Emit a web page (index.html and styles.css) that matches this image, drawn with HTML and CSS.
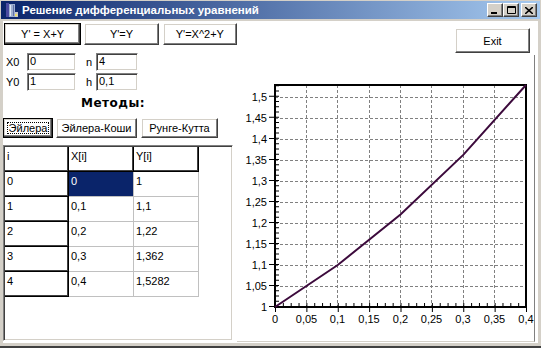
FILE: index.html
```html
<!DOCTYPE html>
<html lang="ru">
<head>
    <meta charset="UTF-8">
    <title>Решение дифференциальных уравнений</title>
    <link rel="stylesheet" href="styles.css">
</head>
<body>
    <div class="window">
        <div class="titlebar">
            <svg class="app-icon" width="16" height="16" viewBox="0 0 16 16">
                <rect x="3" y="1" width="3" height="14" fill="#4a4aa0"/>
                <rect x="6" y="2" width="6" height="13" fill="#9fb0d0"/>
                <rect x="7" y="3" width="1" height="11" fill="#e0e8f8"/>
                <rect x="10" y="3" width="1" height="11" fill="#6070a8"/>
                <rect x="12" y="10" width="3" height="5" fill="#c8c8c8"/>
                <rect x="12" y="12" width="2" height="2" fill="#f0e060"/>
            </svg>
            <span class="title">Решение дифференциальных уравнений</span>
            <div class="caption-buttons">
                <span class="cap-btn"><svg width="8" height="7" viewBox="0 0 8 7"><rect x="0" y="5" width="6" height="2" fill="#000"/></svg></span>
                <span class="cap-btn"><svg width="9" height="8" viewBox="0 0 9 8"><path d="M0.5 0.5h8v7h-8z M0 1.5h9" fill="none" stroke="#000"/></svg></span>
                <span class="cap-btn cap-close"><svg width="8" height="7" viewBox="0 0 8 7"><path d="M0 0l8 7M8 0l-8 7" stroke="#000" stroke-width="1.6"/></svg></span>
            </div>
        </div>

        <div class="client">
            <div class="left-pane">
                <div class="eq-row">
                    <button class="btn btn-default eq-1">Y' = X+Y</button>
                    <button class="btn eq-2">Y'=Y</button>
                    <button class="btn eq-3">Y'=X^2+Y</button>
                </div>

                <div class="params">
                    <div class="param-row">
                        <span class="lbl">X0</span>
                        <div class="edit edit-wide">0</div>
                        <span class="lbl lbl-short">n</span>
                        <div class="edit edit-narrow">4</div>
                    </div>
                    <div class="param-row">
                        <span class="lbl">Y0</span>
                        <div class="edit edit-wide">1</div>
                        <span class="lbl lbl-short">h</span>
                        <div class="edit edit-narrow">0,1</div>
                    </div>
                </div>

                <div class="methods-title">Методы:</div>

                <div class="methods">
                    <button class="btn btn-default btn-focus m-euler">Эйлера</button>
                    <button class="btn m-cauchy">Эйлера-Коши</button>
                    <button class="btn m-runge">Рунге-Кутта</button>
                </div>

                <div class="grid-box">
                    <div class="grid">
                        <div class="cell fixed">i</div>
                        <div class="cell fixed">X[i]</div>
                        <div class="cell fixed">Y[i]</div>

                        <div class="cell fixed">0</div>
                        <div class="cell selected">0</div>
                        <div class="cell">1</div>

                        <div class="cell fixed">1</div>
                        <div class="cell">0,1</div>
                        <div class="cell">1,1</div>

                        <div class="cell fixed">2</div>
                        <div class="cell">0,2</div>
                        <div class="cell">1,22</div>

                        <div class="cell fixed">3</div>
                        <div class="cell">0,3</div>
                        <div class="cell">1,362</div>

                        <div class="cell fixed">4</div>
                        <div class="cell">0,4</div>
                        <div class="cell">1,5282</div>
                    </div>
                </div>
            </div>

            <div class="right-pane">
                <div class="exit-row">
                    <button class="btn exit">Exit</button>
                </div>
                <div class="chart">
                    <svg class="plot" width="297" height="286" viewBox="0 0 297 286">
                        <!-- grid -->
                        <g stroke="#808080" stroke-dasharray="3 2" fill="none">
                            <path d="M69.5 30V252M100.5 30V252M132.5 30V252M163.5 30V252M194.5 30V252M226.5 30V252M257.5 30V252"/>
                            <path d="M38 231.5H289M38 210.5H289M38 189.5H289M38 168.5H289M38 147.5H289M38 126.5H289M38 105.5H289M38 84.5H289M38 63.5H289M38 42.5H289"/>
                        </g>
                        <!-- ticks -->
                        <g stroke="#000" fill="none">
                            <line x1="34.5" y1="252" x2="34.5" y2="30" stroke-width="5" stroke-dasharray="1 20.015"/>
                            <line x1="40.5" y1="252" x2="40.5" y2="30" stroke-width="3" stroke-dasharray="1 4.254"/>
                            <line x1="38" y1="255" x2="290" y2="255" stroke-width="4" stroke-dasharray="1 30.375"/>
                            <line x1="38" y1="249.5" x2="290" y2="249.5" stroke-width="3" stroke-dasharray="1 6.844"/>
                        </g>
                        <!-- frame / axes -->
                        <rect x="38" y="30" width="251" height="222" fill="none" stroke="#000" stroke-width="2"/>
                        <!-- y labels -->
                        <g class="axis-text" text-anchor="end">
                            <text x="30" y="256">1</text>
                            <text x="30" y="235">1,05</text>
                            <text x="30" y="214">1,1</text>
                            <text x="30" y="193">1,15</text>
                            <text x="30" y="172">1,2</text>
                            <text x="30" y="151">1,25</text>
                            <text x="30" y="130">1,3</text>
                            <text x="30" y="109">1,35</text>
                            <text x="30" y="88">1,4</text>
                            <text x="30" y="67">1,45</text>
                            <text x="30" y="46">1,5</text>
                        </g>
                        <!-- x labels -->
                        <g class="axis-text" text-anchor="middle">
                            <text x="38" y="268">0</text>
                            <text x="69.5" y="268">0,05</text>
                            <text x="100.5" y="268">0,1</text>
                            <text x="132" y="268">0,15</text>
                            <text x="163.5" y="268">0,2</text>
                            <text x="194.5" y="268">0,25</text>
                            <text x="226" y="268">0,3</text>
                            <text x="257.5" y="268">0,35</text>
                            <text x="289" y="268">0,4</text>
                        </g>
                        <!-- series -->
                        <polyline points="38,252 100.75,209.97 163.5,159.53 226.25,99.85 289,30" fill="none" stroke="#3c0a3c" stroke-width="2"/>
                    </svg>
                </div>
            </div>
        </div>
    </div>
</body>
</html>
```

FILE: styles.css
```css
* {
    box-sizing: border-box;
}

body {
    margin: 0;
    background: #d4d0c8;
    font-family: "Liberation Sans", Arial, sans-serif;
    font-size: 11px;
    color: #000;
    overflow: hidden;
}

.window {
    width: 541px;
    height: 348px;
    padding-top: 1px;
    border-bottom: 2px solid #404040;
}

/* title bar */
.titlebar {
    margin: 0 1px;
    height: 18px;
    display: flex;
    align-items: center;
    background: linear-gradient(to right, #0a246a, #a6caf0);
}

.app-icon {
    margin-left: 2px;
    flex: none;
}

.title {
    margin-left: 3px;
    color: #fff;
    font-weight: bold;
    font-size: 11.5px;
    white-space: nowrap;
}

.caption-buttons {
    margin-left: auto;
    margin-right: 3px;
    display: flex;
}

.cap-btn {
    width: 16px;
    height: 14px;
    display: flex;
    align-items: center;
    justify-content: center;
    background: #d4d0c8;
    border: 1px solid;
    border-color: #fff #404040 #404040 #fff;
    box-shadow: inset -1px -1px #808080;
}

.cap-close {
    margin-left: 2px;
}

/* client area */
.client {
    margin: 2px 3px 0;
    height: 322px;
    background: #fff;
    display: flex;
}

.left-pane {
    width: 234px;
    flex: none;
}

.right-pane {
    flex: 1;
}

/* buttons */
.btn {
    display: block;
    padding: 0;
    background: #fff;
    font-family: inherit;
    font-size: 11px;
    color: #000;
    border: 1px solid;
    border-color: #fff #404040 #404040 #fff;
    box-shadow: inset -1px -1px #808080, inset 1px 1px #d4d0c8;
}

.btn-default {
    border-color: #000;
    box-shadow: inset -1px -1px #404040, inset -2px -2px #808080, inset 1px 1px #d4d0c8;
}

.btn-focus {
    outline: 1px dotted #000;
    outline-offset: -5px;
}

.eq-row {
    display: flex;
    gap: 3px;
    padding: 2px 0 0 1px;
}

.eq-row .btn {
    height: 22px;
}

.eq-1 { width: 78px; }
.eq-2 { width: 75px; }
.eq-3 { width: 75px; margin-left: 1px; }

/* parameters */
.params {
    margin-top: 8px;
    padding-left: 3px;
    display: flex;
    flex-direction: column;
    gap: 2px;
}

.param-row {
    display: flex;
    height: 18px;
}

.lbl {
    width: 21px;
    line-height: 18px;
}

.lbl-short {
    width: 10px;
    margin-left: 10px;
}

.edit {
    height: 18px;
    padding: 1px 2px 0;
    line-height: 13px;
    border: 1px solid;
    border-color: #808080 #fff #fff #808080;
    box-shadow: inset 1px 1px #404040, inset -1px -1px #d4d0c8;
}

.edit-wide { width: 49px; }
.edit-narrow { width: 42px; }

.methods-title {
    margin-top: 5px;
    height: 15px;
    line-height: 15px;
    padding-left: 78px;
    font-family: "DejaVu Sans", sans-serif;
    font-weight: bold;
    font-size: 12px;
    letter-spacing: 0.5px;
}

.methods {
    margin-top: 7px;
    display: flex;
    gap: 3px;
}

.methods .btn {
    height: 20px;
}

.m-euler { width: 50px; }
.m-cauchy { width: 81px; }
.m-runge { width: 77px; margin-left: 1px; }

/* string grid */
.grid-box {
    margin-top: 7px;
    width: 230px;
    height: 196px;
    border: 1px solid;
    border-color: #808080 #fff #fff #808080;
    box-shadow: inset 1px 1px #404040, inset -1px -1px #d4d0c8;
}

.grid {
    display: grid;
    grid-template-columns: 64px 65px 65px;
    grid-auto-rows: 25px;
    padding: 1px 0 0 1px;
}

.cell {
    padding: 3px 2px 0;
    line-height: 13px;
    border-right: 1px solid #c0c0c0;
    border-bottom: 1px solid #c0c0c0;
}

.fixed {
    border-color: #000;
    box-shadow: inset -1px -1px #404040;
}

.selected {
    background: #0a246a;
    color: #fff;
}

/* right side */
.exit-row {
    display: flex;
    justify-content: flex-end;
    padding: 7px 8px 0 0;
}

.exit {
    width: 75px;
    height: 25px;
}

.chart {
    margin-top: 2px;
    width: 298px;
    height: 287px;
    border-right: 1px solid #808080;
    border-bottom: 1px solid #d4d0c8;
}

.plot {
    display: block;
}

.axis-text {
    font-family: "Liberation Sans", Arial, sans-serif;
    font-size: 11px;
    fill: #000;
}
```
